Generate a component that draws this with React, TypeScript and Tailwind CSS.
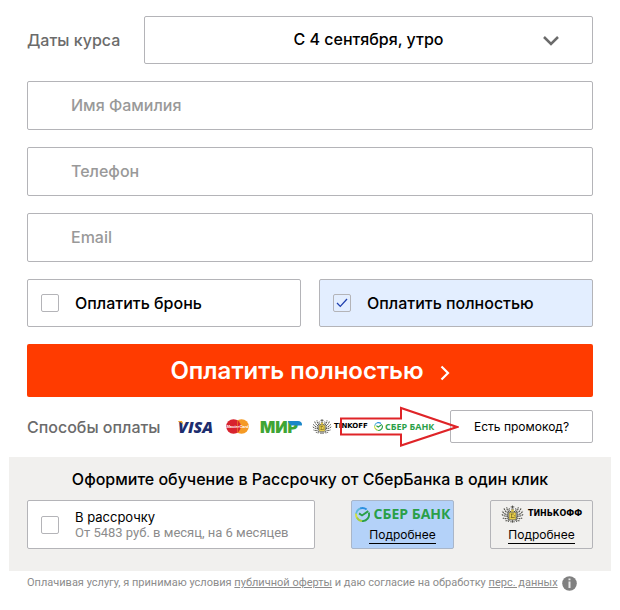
import React from "react";

type Field = {
  id: string;
  type: string;
  placeholder: string;
};

const FIELDS: Field[] = [
  { id: "name", type: "text", placeholder: "Имя Фамилия" },
  { id: "phone", type: "tel", placeholder: "Телефон" },
  { id: "email", type: "email", placeholder: "Email" },
];

function CheckBox({ id, defaultChecked }: { id: string; defaultChecked?: boolean }) {
  return (
    <span className="grid h-[18px] w-[18px] shrink-0 place-items-center">
      <input
        id={id}
        type="checkbox"
        defaultChecked={defaultChecked}
        className="peer col-start-1 row-start-1 h-[18px] w-[18px] appearance-none rounded-xs border border-[#b4b4b8]"
      />
      <svg
        viewBox="0 0 12 10"
        className="pointer-events-none col-start-1 row-start-1 hidden h-[10px] w-3 peer-checked:block"
        fill="none"
        stroke="#1f3fae"
        strokeWidth="1.3"
      >
        <path d="M1 5l3.3 3.4L11 1" />
      </svg>
    </span>
  );
}

function Crest({ className }: { className: string }) {
  return (
    <svg viewBox="0 0 26 20" className={className} fill="none">
      {/* крылья */}
      <g stroke="#55554f" strokeWidth="1.300" strokeDasharray="2.200 .7">
        <path d="M9 8C7.500 6.500 6.500 4.500 6.500 2M8.500 9.500C6 8.500 4 6 3.500 3.500M8.500 11C5 11 2.500 9 1.500 6.500M8.500 12.500C5 13 2.500 12 1 10.500M9 14C6.500 15.500 4 15.500 2 14.500M9.500 15.500C8 17.500 6 18 4.500 17.500" />
        <path d="M17 8c1.500-1.500 2.500-3.500 2.500-6M17.500 9.500c2.500-1 4.500-3.500 5-6M17.500 11c3.500 0 6-2 7-4.500M17.500 12.500c3.500.5 6-.5 7.500-2M17 14c2.500 1.500 5 1.500 7 .5M16.500 15.500c1.500 2 3.500 2.500 5 2" />
      </g>
      {/* головы и корона */}
      <g stroke="#4d4d48" strokeWidth="1.100">
        <path d="M11.500 7.500C9 7 8.500 5 9.500 3.500M14.500 7.500C17 7 17.500 5 16.500 3.500M13 .5v3M11 2h4M11.500 4.500h3M9.500 17l-1.500 2M16.500 17l1.500 2M13 17v2.800M11.300 17.500v2M14.700 17.500v2" />
      </g>
      <path d="M11.500 5h3v3h-3z" fill="#d9c04a" />
      <path d="M9 8h8v7l-1 1.500h-6L9 15z" fill="#ecd24c" stroke="#4d4d48" strokeWidth=".7" />
      <path d="M11 10h3.500M12 10v4M11 14h4.500M14.500 12h1.500" stroke="#6a5a1d" strokeWidth=".8" />
    </svg>
  );
}

function SberMark({ className }: { className: string }) {
  return (
    <svg viewBox="0 0 16 16" className={className} fill="none" strokeWidth="2">
      <path d="M2.200 11.600A7 7 0 0 1 1.200 6.500" stroke="#d5df3c" />
      <path d="M1.200 7A7 7 0 0 1 6 1.400" stroke="#5fb9d8" />
      <path d="M5.500 1.500A7 7 0 0 1 12.400 2.700" stroke="#2a8fe0" />
      <path d="M2 11.200A7 7 0 0 0 8 15" stroke="#a8cf3a" />
      <path d="M7.500 15A7 7 0 0 0 14.700 6" stroke="#2a9f48" />
      <path d="M4.300 6.800L7.500 9l6.700-4.600" stroke="#2a9f48" />
    </svg>
  );
}

function PaymentLogos() {
  return (
    <div className="flex items-center">
      <span className="relative w-[37px] font-['Open_Sans',sans-serif] text-base leading-4 font-extrabold text-[#1d2d6e] italic">
        VISA
        <svg viewBox="0 0 6 5" className="absolute top-[2px] left-0 h-[5px] w-[6px]">
          <path d="M0 0h4l1.600 4.500C4.500 2.500 2.500 1 0 .6z" fill="#f0a21c" />
        </svg>
      </span>
      <span className="ml-[11px] grid h-[15px] w-[23px] place-items-center">
        <svg viewBox="0 0 23 15" className="col-start-1 row-start-1 h-[15px] w-[23px]">
          <circle cx="15.500" cy="7.500" r="7.300" fill="#f59a23" />
          <circle cx="7.500" cy="7.500" r="7.300" fill="#d8232e" />
          <path d="M11.500 1.400v12.200" stroke="#e8602a" strokeWidth="1" />
        </svg>
        <span className="z-10 col-start-1 row-start-1 font-['Liberation_Sans',sans-serif] text-[4px] leading-none font-bold text-white italic">
          MasterCard
        </span>
      </span>
      <span className="relative ml-[11px] w-[42px] font-[Inter,sans-serif] text-base leading-4 font-black text-[#3fa535]">
        МИР
        <svg viewBox="0 0 14 8" className="absolute top-[2px] right-0 h-2 w-[14px]">
          <path d="M0 0h10c2.500 0 4 1.300 4 3.200 0 .5-.1.900-.2 1.300H5C2.500 4.500.700 2.800 0 0z" fill="#1b87c9" />
        </svg>
      </span>
      <Crest className="ml-[10px] h-[17px] w-5" />
      <span className="ml-[2px] w-[34px] font-['DejaVu_Sans',sans-serif] text-[7px] leading-none font-bold text-black">
        TINKOFF
      </span>
      <SberMark className="ml-[6px] h-[9px] w-[9px]" />
      <span className="ml-[2px] font-['Open_Sans',sans-serif] text-[9px] leading-none font-bold whitespace-nowrap text-[#2a9f48]">
        СБЕР БАНК
      </span>
    </div>
  );
}

export default function App() {
  return (
    <form className="bg-white pt-4 pb-4 font-[Inter,sans-serif] text-black">
      <div className="flex flex-col gap-[17px] px-[27px]">
        <div className="flex items-center">
          <label htmlFor="dates" className="w-[117px] shrink-0 text-base font-medium text-[#6b6b6b]">
            Даты курса
          </label>
          <div className="relative flex-1">
            <select
              id="dates"
              className="block h-12 w-full appearance-none rounded-xs border border-[#b4b4b8] bg-white px-12 pb-[2px] text-base font-medium [text-align-last:center]"
            >
              <option>С 4 сентября, утро</option>
            </select>
            <svg
              viewBox="0 0 16 10"
              className="pointer-events-none absolute top-5 right-[34px] h-[10px] w-4"
              fill="none"
              stroke="#6b6b6b"
              strokeWidth="2.500"
            >
              <path d="M1 1l7 7 7-7" />
            </svg>
          </div>
        </div>

        {FIELDS.map((f) => (
          <input
            key={f.id}
            id={f.id}
            type={f.type}
            placeholder={f.placeholder}
            aria-label={f.placeholder}
            className="block h-[49px] w-full rounded-xs border border-[#b4b4b8] bg-white px-[43px] pb-[2px] text-base font-medium placeholder:text-[#999999]"
          />
        ))}

        <div className="grid grid-cols-2 gap-[18px]">
          <label
            htmlFor="deposit"
            className="flex h-12 items-center gap-4 rounded-xs border border-[#b4b4b8] px-[13px] text-base font-medium"
          >
            <CheckBox id="deposit" />
            Оплатить бронь
          </label>
          <label
            htmlFor="full"
            className="flex h-12 items-center gap-4 rounded-xs border border-[#b4b4b8] bg-[#e3eeff] px-[13px] text-base font-medium"
          >
            <CheckBox id="full" defaultChecked />
            Оплатить полностью
          </label>
        </div>

        <button
          type="submit"
          className="flex h-[53px] items-center justify-center gap-4 rounded-xs bg-[#ff3b00] text-2xl font-semibold text-white"
        >
          Оплатить полностью
          <svg viewBox="0 0 10 16" className="mt-1 h-4 w-[10px]" fill="none" stroke="#fff" strokeWidth="2.200">
            <path d="M1.500 1.500L8 8l-6.500 6.500" />
          </svg>
        </button>
      </div>

      {/* Способы оплаты */}
      <div className="mt-[13px] flex items-center justify-between px-[27px]">
        <div className="flex items-center">
          <span className="w-[151px] text-base font-medium text-[#6b6b6b]">Способы оплаты</span>
          <PaymentLogos />
        </div>
        <div className="relative">
          <button type="button" className="h-[33px] w-[143px] rounded-xs border border-[#b4b4b8] bg-white text-xs">
            Есть промокод?
          </button>
          <svg
            viewBox="0 0 120 42"
            className="pointer-events-none absolute -top-1 -left-[111px] h-[42px] w-[120px]"
            fill="none"
            stroke="#df2428"
            strokeWidth="2"
          >
            <path d="M2 12.500h60V2l56 19-56 18.500V28.500H2z" />
          </svg>
        </div>
      </div>

      {/* Рассрочка */}
      <section className="mx-[9px] mt-[14px] bg-[#f1f0ee] px-[18px] pt-[10px] pb-[22px]">
        <h2 className="text-center text-base font-medium">
          Оформите обучение в Рассрочку от СберБанка в один клик
        </h2>
        <div className="mt-[9px] flex items-stretch justify-between">
          <label
            htmlFor="installments"
            className="flex h-[49px] w-[288px] items-center gap-4 rounded-xs border border-[#b4b4b8] bg-white px-[13px]"
          >
            <CheckBox id="installments" />
            <span className="leading-4">
              <span className="block text-[13px] leading-4">В рассрочку</span>
              <span className="block font-[Roboto,sans-serif] text-[13px] leading-4 whitespace-nowrap text-[#8c8c8c]">
                От 5483 руб. в месяц, на 6 месяцев
              </span>
            </span>
          </label>
          <div className="flex flex-col items-center justify-center rounded-xs border border-[#a9b6c9] bg-[#b4d2f9] px-[3px]">
            <span className="flex h-[18px] items-center gap-1 font-['Open_Sans',sans-serif] text-sm leading-none font-bold whitespace-nowrap text-[#2a9f48]">
              <SberMark className="h-[15px] w-[15px]" />
              СБЕР БАНК
            </span>
            <a href="#" className="mt-1 border-b border-black text-xs leading-4">
              Подробнее
            </a>
          </div>
          <div className="flex w-[103px] flex-col items-center justify-center rounded-xs border border-[#b4b4b8]">
            <span className="flex h-[18px] items-center gap-1 font-['DejaVu_Sans',sans-serif] text-[8px] leading-none font-bold">
              <Crest className="h-5 w-[23px]" />
              ТИНЬКОФФ
            </span>
            <a href="#" className="mt-1 border-b border-black text-xs leading-4">
              Подробнее
            </a>
          </div>
        </div>
      </section>

      <div className="mt-1 flex items-center gap-1 px-[27px] font-[Roboto,sans-serif] text-[11px] whitespace-nowrap text-[#8c8c8c]">
        <p>
          Оплачивая услугу, я принимаю условия{" "}
          <a href="#" className="underline">
            публичной оферты
          </a>{" "}
          и даю согласие на обработку{" "}
          <a href="#" className="underline">
            перс. данных
          </a>
        </p>
        <svg viewBox="0 0 15 15" className="h-[15px] w-[15px] shrink-0">
          <circle cx="7.500" cy="7.500" r="7.300" fill="#808080" />
          <path d="M7.500 2.500v1.800M7.500 5.500V12" stroke="#e8e8e8" strokeWidth="2" />
        </svg>
      </div>
    </form>
  );
}
